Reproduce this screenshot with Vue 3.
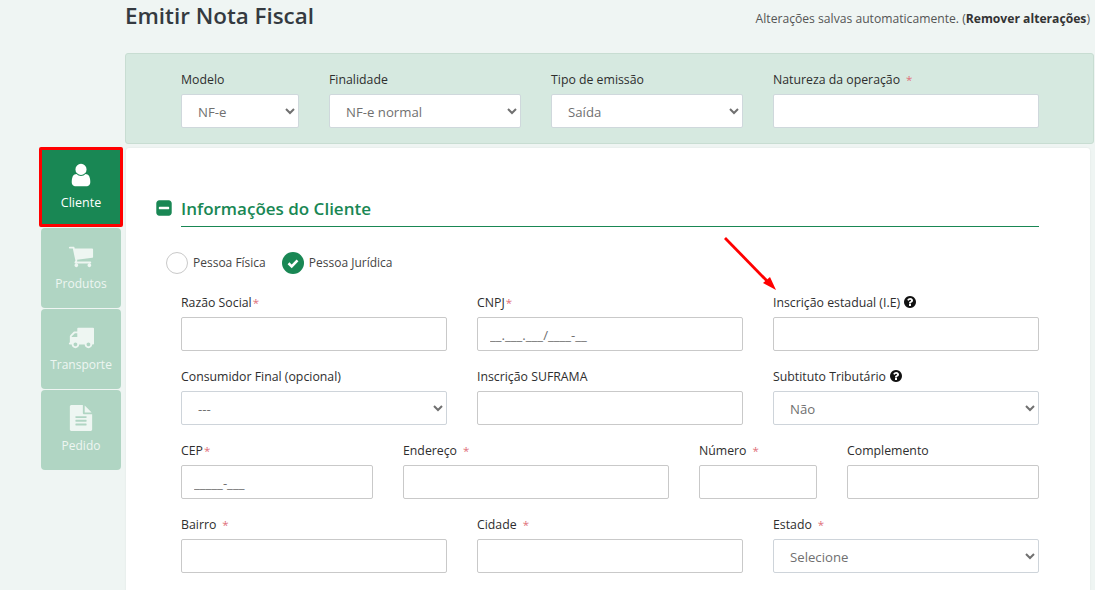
<template>
  <div class="page">
    <nav class="tabs">
      <button
        v-for="tab in tabs"
        :key="tab.label"
        class="tab"
        :class="{ 'tab--active': tab.active }"
      >
        <svg class="tab__icon" viewBox="0 0 1792 1792"><path :d="tab.icon" fill="currentColor" /></svg>
        <span>{{ tab.label }}</span>
      </button>
    </nav>

    <main class="main">
      <header class="top">
        <h1 class="top__title">Emitir Nota Fiscal</h1>
        <p class="top__saved">Alterações salvas automaticamente. (<b>Remover alterações</b>)</p>
      </header>

      <section class="bar">
        <div class="grid">
          <div v-for="f in barFields" :key="f.label" class="field" :class="`span-${f.span}`">
            <label class="field__label">{{ f.label }}<i v-if="f.req" class="req req--gap">*</i></label>
            <select v-if="f.options" class="control control--flat">
              <option v-for="o in f.options" :key="o">{{ o }}</option>
            </select>
            <input v-else class="control control--flat" />
          </div>
        </div>
      </section>

      <section class="card">
        <h2 class="section-title">
          <svg class="section-title__icon" viewBox="0 0 1792 1792"><path :d="icons.minus" fill="currentColor" /></svg>
          Informações do Cliente
        </h2>

        <div class="person">
          <label class="radio"><span class="radio__dot"></span>Pessoa Física</label>
          <label class="radio">
            <span class="radio__dot radio__dot--on">
              <svg viewBox="0 0 22 22"><path d="M6.5 11.3l3.2 3.1 5.8-6" fill="none" stroke="#fff" stroke-width="2.6" /></svg>
            </span>
            Pessoa Jurídica
          </label>
        </div>

        <div class="grid grid--form">
          <div v-for="f in formFields" :key="f.label" class="field" :class="`span-${f.span}`">
            <label class="field__label">
              {{ f.label }}<i v-if="f.req" class="req" :class="{ 'req--gap': f.req === 'gap' }">*</i>
              <svg v-if="f.help" class="help" viewBox="0 0 1792 1792"><path :d="icons.help" fill="#111" /></svg>
            </label>
            <select v-if="f.options" class="control control--select">
              <option v-for="o in f.options" :key="o">{{ o }}</option>
            </select>
            <input v-else class="control" :value="f.mask" />
          </div>
        </div>

        <svg class="arrow" width="60" height="60" viewBox="0 0 60 60">
          <path d="M3 2L46 46" stroke="#f00" stroke-width="2.800" fill="none" />
          <path d="M54 54L41 47L48 41z" fill="#f00" />
        </svg>
      </section>
    </main>
  </div>
</template>

<script setup>
const icons = {
  user: 'M1536 1399q0 109-62.5 187t-150.5 78h-854q-88 0-150.5-78t-62.5-187q0-85 8.5-160.5t31.5-152 58.5-131 94-89 134.5-34.5q131 128 313 128t313-128q76 0 134.5 34.500t94 89 58.5 131 31.5 152 8.5 160.5zm-256-887q0 159-112.5 271.5t-271.5 112.5-271.5-112.5-112.5-271.5 112.5-271.5 271.5-112.5 271.5 112.5 112.5 271.5z',
  cart: 'M704 1536q0 52-38 90t-90 38-90-38-38-90 38-90 90-38 90 38 38 90zm896 0q0 52-38 90t-90 38-90-38-38-90 38-90 90-38 90 38 38 90zm128-1088v512q0 24-16.5 42.5t-40.5 21.5l-1044 122q13 60 13 70 0 16-24 64h920q26 0 45 19t19 45-19 45-45 19h-1024q-26 0-45-19t-19-45q0-11 8-31.5t16-36 21.5-40 15.5-29.5l-177-823h-204q-26 0-45-19t-19-45 19-45 45-19h256q16 0 28.5 6.5t19.5 15.5 13 24.5 8 26 5.5 29.5 4.5 26h1201q26 0 45 19t19 45z',
  truck: 'M640 1408q0-52-38-90t-90-38-90 38-38 90 38 90 90 38 90-38 38-90zm-384-512h384v-256h-158q-13 0-22 9l-195 195q-9 9-9 22v30zm1280 512q0-52-38-90t-90-38-90 38-38 90 38 90 90 38 90-38 38-90zm256-1088v1024q0 15-4 26.5t-13.5 18.5-16.5 11.5-23.5 6-22.5 2-25.5 0-22.5-.5q0 106-75 181t-181 75-181-75-75-181h-384q0 106-75 181t-181 75-181-75-75-181h-64q-3 0-22.5.5t-25.5 0-22.5-2-23.5-6-16.5-11.5-13.5-18.5-4-26.5q0-26 19-45t45-19v-320q0-8-.5-35t0-38 2.5-34.5 6.5-37 14-30.5 22.5-30l198-198q19-19 50.5-32t58.5-13h160v-192q0-26 19-45t45-19h1024q26 0 45 19t19 45z',
  file: 'M1596 476q14 14 28 36h-472v-472q22 14 36 28zm-476 164h544v1056q0 40-28 68t-68 28h-1344q-40 0-68-28t-28-68v-1600q0-40 28-68t68-28h800v544q0 40 28 68t68 28zm160 736v-64q0-14-9-23t-23-9h-704q-14 0-23 9t-9 23v64q0 14 9 23t23 9h704q14 0 23-9t9-23zm0-256v-64q0-14-9-23t-23-9h-704q-14 0-23 9t-9 23v64q0 14 9 23t23 9h704q14 0 23-9t9-23zm0-256v-64q0-14-9-23t-23-9h-704q-14 0-23 9t-9 23v64q0 14 9 23t23 9h704q14 0 23-9t9-23z',
  minus: 'M1408 960v-128q0-26-19-45t-45-19h-896q-26 0-45 19t-19 45v128q0 26 19 45t45 19h896q26 0 45-19t19-45zm256-544v960q0 119-84.5 203.5t-203.5 84.5h-960q-119 0-203.5-84.5t-84.5-203.5v-960q0-119 84.5-203.5t203.5-84.5h960q119 0 203.5 84.5t84.5 203.5z',
  help: 'M1024 1376v-192q0-14-9-23t-23-9h-192q-14 0-23 9t-9 23v192q0 14 9 23t23 9h192q14 0 23-9t9-23zm256-672q0-88-55.5-163t-138.5-116-170-41q-243 0-371 213-15 24 8 42l132 100q7 6 19 6 16 0 25-12 53-68 86-92 34-24 86-24 48 0 85.5 26t37.5 59q0 38-20 61t-68 45q-63 28-115.5 86.5t-52.5 125.5v36q0 14 9 23t23 9h192q14 0 23-9t9-23q0-19 21.5-49.5t54.5-49.5q32-18 49-28.5t46-35 44.5-48 28-60.5 12.5-81zm384 192q0 209-103 385.5t-279.5 279.5-385.5 103-385.5-103-279.5-279.5-103-385.5 103-385.5 279.5-279.5 385.5-103 385.500 103 279.5 279.5 103 385.5z'
}

const tabs = [
  { label: 'Cliente', icon: icons.user, active: true },
  { label: 'Produtos', icon: icons.cart },
  { label: 'Transporte', icon: icons.truck },
  { label: 'Pedido', icon: icons.file }
]

const barFields = [
  { label: 'Modelo', span: 2, options: ['NF-e'] },
  { label: 'Finalidade', span: 3, options: ['NF-e normal'] },
  { label: 'Tipo de emissão', span: 3, options: ['Saída'] },
  { label: 'Natureza da operação', span: 4, req: 'gap' }
]

const formFields = [
  { label: 'Razão Social', span: 4, req: true },
  { label: 'CNPJ', span: 4, req: true, mask: '__.___.___/____-__' },
  { label: 'Inscrição estadual (I.E)', span: 4, help: true },
  { label: 'Consumidor Final (opcional)', span: 4, options: ['---'] },
  { label: 'Inscrição SUFRAMA', span: 4 },
  { label: 'Subtituto Tributário', span: 4, help: true, options: ['Não'] },
  { label: 'CEP', span: 3, req: true, mask: '_____-___' },
  { label: 'Endereço', span: 4, req: 'gap' },
  { label: 'Número', span: 2, req: 'gap' },
  { label: 'Complemento', span: 3 },
  { label: 'Bairro', span: 4, req: 'gap' },
  { label: 'Cidade', span: 4, req: 'gap' },
  { label: 'Estado', span: 4, req: 'gap', options: ['Selecione'] }
]
</script>

<style>
html, body {
  overflow: hidden;
}
</style>

<style scoped>
.page {
  display: flex;
  height: 590px;
  overflow: hidden;
  background: #eff5f3;
  font-family: "Open Sans", "Noto Sans", sans-serif;
  font-size: 12.3px;
  color: #333;
}

.tabs {
  width: 80px;
  margin: 147px 4px 0 41px;
  flex-shrink: 0;
  display: flex;
  flex-direction: column;
  gap: 1px;
}

.tab {
  height: 80px;
  padding: 15px 0 0;
  border: 0;
  border-radius: 4px;
  background: #b0d5c3;
  color: #eef6f2;
  font: inherit;
  font-size: 12px;
  display: flex;
  flex-direction: column;
  align-items: center;
  gap: 6px;
}

.tab--active {
  margin: 0 -2px;
  padding-top: 12px;
  border: 3px solid #f00;
  border-radius: 2px;
  background: #198754;
  color: #fff;
  font-size: 12.5px;
}

.tab__icon {
  width: 26px;
  height: 26px;
}

.main {
  flex: 1;
  min-width: 0;
}

.top {
  height: 53px;
  display: flex;
  justify-content: space-between;
  padding-right: 5px;
}

.top__title {
  margin: 0;
  font-size: 22.4px;
  font-weight: 600;
  line-height: 32px;
  color: #343a40;
}

.top__saved {
  margin: 11px 0 0;
  font-size: 12.15px;
  line-height: 16px;
  color: #555;
}

.top__saved b {
  font-weight: 700;
  color: #333;
}

.bar {
  height: 91px;
  box-sizing: border-box;
  margin-right: 1px;
  padding: 16px 54px 0 55px;
  background: #d6e9e0;
  border: 1px solid #c8ddd2;
  border-radius: 3px;
}

.grid {
  display: grid;
  grid-template-columns: repeat(12, 44px);
  column-gap: 30px;
}

.span-2 { grid-column: span 2; }
.span-3 { grid-column: span 3; }
.span-4 { grid-column: span 4; }

.field__label {
  display: flex;
  align-items: center;
  height: 18px;
  margin-bottom: 6px;
  color: #2e2e2e;
  white-space: pre-wrap;
}

.req {
  margin-left: 1px;
  font-size: 11.5px;
  font-style: normal;
  color: #e0707a;
}

.req--gap {
  margin-left: 6px;
}

.help {
  width: 14px;
  height: 14px;
  margin-left: 3px;
}

.control {
  display: block;
  width: 100%;
  height: 34px;
  box-sizing: border-box;
  padding: 2px 12px 0;
  border: 1px solid #c9c9c9;
  border-radius: 2px;
  background: #fff;
  font: inherit;
  font-size: 13.2px;
  color: #707070;
}

.control--flat {
  border-color: #cfd8dc;
}

select.control {
  padding-left: 12px;
}

.control--select {
  border-color: #ced4da;
}

.card {
  position: relative;
  height: 460px;
  margin: 4px 5px 0 1px;
  padding: 0 51px 0 55px;
  background: #fff;
  border-radius: 3px;
  box-shadow: 0 0 2px rgba(0, 0, 0, 0.08);
}

.section-title {
  position: relative;
  margin: 0;
  padding-top: 48px;
  height: 79px;
  box-sizing: border-box;
  border-bottom: 1px solid #198754;
  font-size: 17px;
  font-weight: 600;
  line-height: 26px;
  color: #198754;
}

.section-title__icon {
  position: absolute;
  left: -26px;
  top: 51px;
  width: 18px;
  height: 18px;
}

.person {
  display: flex;
  align-items: center;
  gap: 16px;
  margin: 24px 0 0 -15px;
  height: 22px;
  font-size: 12px;
}

.radio {
  display: flex;
  align-items: center;
  gap: 5px;
  color: #444;
}

.radio__dot {
  width: 22px;
  height: 22px;
  margin-top: 2px;
  box-sizing: border-box;
  border: 1px solid #c9c9c9;
  border-radius: 50%;
  background: #fff;
}

.radio__dot--on {
  border: 0;
  background: #198754;
}

.radio__dot svg {
  display: block;
}

.grid--form {
  margin-top: 20px;
  row-gap: 16px;
}

.arrow {
  position: absolute;
  left: 596px;
  top: 88px;
}
</style>
